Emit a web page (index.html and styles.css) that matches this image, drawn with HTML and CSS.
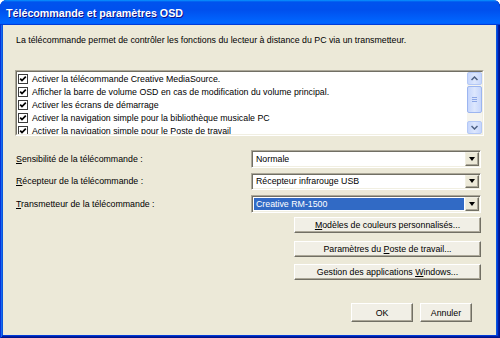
FILE: index.html
```html
<!DOCTYPE html>
<html lang="fr">
<head>
    <meta charset="UTF-8">
    <title>Télécommande et paramètres OSD</title>
    <link rel="stylesheet" href="styles.css">
</head>
<body>
    <div class="window">
        <div class="titlebar">
            <span class="title">Télécommande et paramètres OSD</span>
        </div>
        <div class="content">
            <p class="intro">La télécommande permet de contrôler les fonctions du lecteur à distance du PC via un transmetteur.</p>

            <div class="listbox">
                <div class="listbox-inner">
                    <ul class="items">
                        <li><svg class="check" width="10" height="10" viewBox="0 0 10 10"><rect x="0.5" y="0.5" width="9" height="9" fill="#fff" stroke="#3b3b3b"/><path d="M2.2 4.6 L4 6.6 L7.8 2.6" stroke="#000" stroke-width="1.7" fill="none"/></svg>Activer la télécommande Creative MediaSource.</li>
                        <li><svg class="check" width="10" height="10" viewBox="0 0 10 10"><rect x="0.5" y="0.5" width="9" height="9" fill="#fff" stroke="#3b3b3b"/><path d="M2.2 4.6 L4 6.6 L7.8 2.6" stroke="#000" stroke-width="1.7" fill="none"/></svg>Afficher la barre de volume OSD en cas de modification du volume principal.</li>
                        <li><svg class="check" width="10" height="10" viewBox="0 0 10 10"><rect x="0.5" y="0.5" width="9" height="9" fill="#fff" stroke="#3b3b3b"/><path d="M2.2 4.6 L4 6.6 L7.8 2.6" stroke="#000" stroke-width="1.7" fill="none"/></svg>Activer les écrans de démarrage</li>
                        <li><svg class="check" width="10" height="10" viewBox="0 0 10 10"><rect x="0.5" y="0.5" width="9" height="9" fill="#fff" stroke="#3b3b3b"/><path d="M2.2 4.6 L4 6.6 L7.8 2.6" stroke="#000" stroke-width="1.7" fill="none"/></svg>Activer la navigation simple pour la bibliothèque musicale PC</li>
                        <li><svg class="check" width="10" height="10" viewBox="0 0 10 10"><rect x="0.5" y="0.5" width="9" height="9" fill="#fff" stroke="#3b3b3b"/><path d="M2.2 4.6 L4 6.6 L7.8 2.6" stroke="#000" stroke-width="1.7" fill="none"/></svg>Activer la navigation simple pour le Poste de travail</li>
                    </ul>
                    <div class="scrollbar">
                        <div class="sb-btn">
                            <svg width="7" height="5" viewBox="0 0 7 5"><path d="M0.5 4 L3.5 1 L6.5 4" stroke="#4d6185" stroke-width="1.5" fill="none"/></svg>
                        </div>
                        <div class="sb-thumb">
                            <span class="grip"></span>
                        </div>
                        <div class="sb-track"></div>
                        <div class="sb-btn">
                            <svg width="7" height="5" viewBox="0 0 7 5"><path d="M0.5 1 L3.5 4 L6.5 1" stroke="#4d6185" stroke-width="1.5" fill="none"/></svg>
                        </div>
                    </div>
                </div>
            </div>

            <div class="form">
                <label class="field-label"><u>S</u>ensibilité de la télécommande :</label>
                <div class="combo">
                    <span class="combo-value">Normale</span>
                    <span class="combo-btn"><span class="arrow"></span></span>
                </div>

                <label class="field-label"><u>R</u>écepteur de la télécommande :</label>
                <div class="combo">
                    <span class="combo-value">Récepteur infrarouge USB</span>
                    <span class="combo-btn"><span class="arrow"></span></span>
                </div>

                <label class="field-label"><u>T</u>ransmetteur de la télécommande :</label>
                <div class="combo">
                    <span class="combo-value selected">Creative RM-1500</span>
                    <span class="combo-btn"><span class="arrow"></span></span>
                </div>
            </div>

            <div class="actions">
                <button class="btn wide"><u>M</u>odèles de couleurs personnalisés...</button>
                <button class="btn wide">Paramètres du <u>P</u>oste de travail...</button>
                <button class="btn wide">Gestion des applications <u>W</u>indows...</button>
            </div>

            <div class="footer">
                <button class="btn ok">OK</button>
                <button class="btn cancel">Annuler</button>
            </div>
        </div>
    </div>
</body>
</html>
```

FILE: styles.css
```css
* {
    margin: 0;
    padding: 0;
    box-sizing: border-box;
}

body {
    font-family: "Liberation Sans", Arial, sans-serif;
    font-size: 8.8px;
    color: #000;
    background: #fff;
}

/* window frame */
.window {
    width: 500px;
    height: 338px;
    display: flex;
    flex-direction: column;
    background: #0855dd;
    border-radius: 7px 7px 0 0;
    box-shadow: inset 1px 0 #0831d9, inset -1px -1px #00138c, inset 2px 0 #166aee, inset -2px -2px #001ea0, inset -3px -3px #003bda;
}

.titlebar {
    height: 25px;
    display: flex;
    align-items: center;
    padding-left: 6px;
    border-radius: 7px 7px 0 0;
    background: linear-gradient(180deg, #0997ff, #0053ee 8%, #0050ee 40%, #0066ff 88%, #0066ff 93%, #005bff 95%, #003dd7 96%, #003dd7);
}

.title {
    color: #fff;
    font-weight: bold;
    font-size: 10.7px;
    text-shadow: 1px 1px #0f1089;
}

.content {
    flex: 1;
    margin: 0 4px 3px 3px;
    background: #ece9d8;
    padding: 9px 12px 0 12px;
}

.intro {
    line-height: 12px;
    padding-left: 1px;
}

/* check list */
.listbox {
    margin-top: 24px;
    height: 66px;
    border: 1px solid;
    border-color: #aca899 #fff #fff #aca899;
}

.listbox-inner {
    height: 100%;
    display: flex;
    background: #fff;
    border: 1px solid;
    border-color: #716f64 #f1efe2 #f1efe2 #716f64;
}

.items {
    flex: 1;
    list-style: none;
    overflow: hidden;
}

.items li {
    height: 13px;
    display: flex;
    align-items: center;
    gap: 4px;
    padding-left: 1px;
    white-space: nowrap;
}

.check {
    flex: none;
}

.scrollbar {
    width: 15px;
    display: flex;
    flex-direction: column;
    background: #f5f4ee;
}

.sb-btn {
    height: 13px;
    display: flex;
    align-items: center;
    justify-content: center;
    background: linear-gradient(90deg, #c6d6fc, #dde7fd 50%, #c6d6fc);
    border: 1px solid #b4c8f6;
    border-radius: 2px;
}

.sb-thumb {
    height: 27px;
    margin-top: 1px;
    display: flex;
    align-items: center;
    justify-content: center;
    background: linear-gradient(90deg, #c6d6fc, #dde7fd 50%, #c6d6fc);
    border: 1px solid #9cb5f0;
    border-radius: 2px;
}

.grip {
    width: 5px;
    height: 5px;
    border-top: 1px solid #8ca6e6;
    border-bottom: 1px solid #8ca6e6;
    background: linear-gradient(#8ca6e6, #8ca6e6) center / 5px 1px no-repeat;
}

.sb-track {
    flex: 1;
}

/* fields */
.form {
    margin-top: 14px;
    display: grid;
    grid-template-columns: 236px 230px;
    row-gap: 5px;
    align-items: center;
}

.field-label {
    padding-left: 1px;
}

.combo {
    height: 17.5px;
    display: flex;
    border: 1px solid;
    border-color: #aca899 #fff #fff #aca899;
    box-shadow: inset 1px 1px #716f64, inset -1px -1px #f1efe2;
    background: #fff;
    padding: 1px;
}

.combo-value {
    flex: 1;
    display: flex;
    align-items: center;
    padding-left: 2px;
    margin: 1px;
}

.combo-value.selected {
    background: #316ac5;
    color: #fff;
}

.combo-btn {
    width: 14px;
    display: flex;
    align-items: center;
    justify-content: center;
    background: #ece9d8;
    border: 1px solid;
    border-color: #f1efe2 #716f64 #716f64 #f1efe2;
    box-shadow: inset -1px -1px #aca899;
}

.arrow {
    width: 0;
    height: 0;
    border-left: 3.5px solid transparent;
    border-right: 3.5px solid transparent;
    border-top: 4px solid #000;
}

/* buttons */
.btn {
    font-family: inherit;
    font-size: 8.8px;
    color: #000;
    background: #f1efe6;
    border: 1px solid;
    border-color: #fff #716f64 #716f64 #fff;
    box-shadow: inset -1px -1px #aca899;
}

.actions {
    margin-top: 4.5px;
    padding-right: 3px;
    display: flex;
    flex-direction: column;
    align-items: flex-end;
    gap: 7.5px;
}

.btn.wide {
    width: 187px;
    height: 16px;
}

.footer {
    margin-top: 23px;
    display: flex;
    justify-content: flex-end;
    gap: 7px;
    padding-right: 12px;
}

.btn.ok {
    width: 62px;
    height: 19px;
}

.btn.cancel {
    width: 52px;
    height: 19px;
}
```
